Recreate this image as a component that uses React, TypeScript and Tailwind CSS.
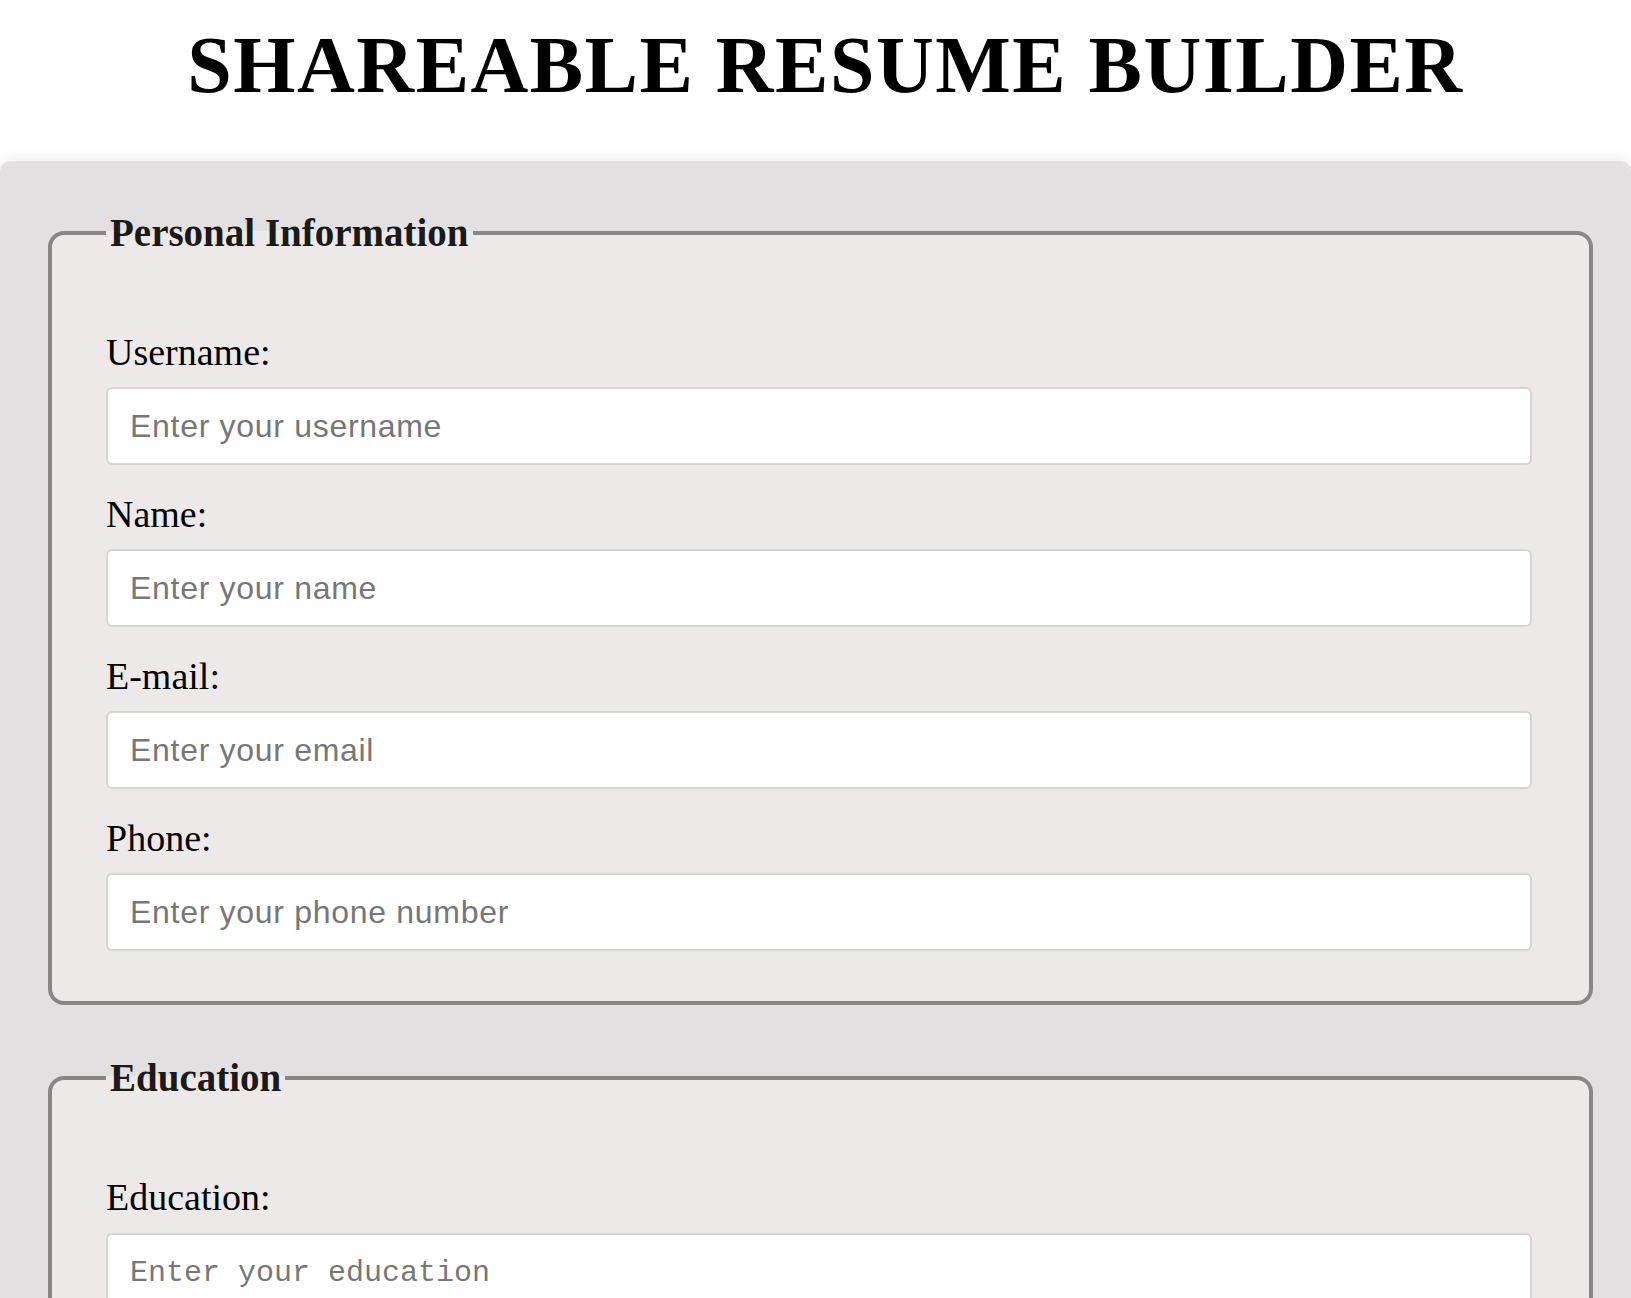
import React from "react";

type FieldProps = { label: string; placeholder: string; type?: string };

function Field({ label, placeholder, type = "text" }: FieldProps) {
  return (
    <div className="flex flex-col">
      <label className="block h-[42px] text-[38px] leading-[42px] text-black [font-family:'Liberation_Serif','Times_New_Roman',serif]">
        {label}
      </label>
      <input
        type={type}
        placeholder={placeholder}
        className="mt-[14px] h-[78px] w-full rounded-[6px] border-2 border-[#d6d4d4] bg-white px-[22px] text-[32px] tracking-[0.7px] text-black outline-none placeholder:text-[#777777] [font-family:'Liberation_Sans',Arial,sans-serif]"
      />
    </div>
  );
}

export default function App() {
  return (
    <div className="min-h-screen bg-white">
      <h1 className="pt-[21px] pl-[20px] text-center text-[80px] font-bold leading-[88px] tracking-[1.5px] text-black [font-family:'Liberation_Serif','Times_New_Roman',serif]">
        SHAREABLE RESUME BUILDER
      </h1>

      <div className="mt-[52px] rounded-t-[10px] bg-[#e2e0e1] pl-[48px] pr-[38px] pt-[51px] pb-[60px] shadow-[0_-5px_12px_rgba(0,0,0,0.05)]">
        <fieldset className="rounded-[16px] border-4 border-[#8a8687] bg-[#ece9e8] pl-[54px] pr-[57px] pt-[77px] pb-[50px]">
          <legend className="px-[4px] text-[39px] font-bold leading-[42px] text-[#1c1919] [font-family:'Liberation_Serif','Times_New_Roman',serif]">
            Personal Information
          </legend>
          <div className="flex flex-col gap-[28px]">
            <Field label="Username:" placeholder="Enter your username" />
            <Field label="Name:" placeholder="Enter your name" />
            <Field label="E-mail:" placeholder="Enter your email" type="email" />
            <Field label="Phone:" placeholder="Enter your phone number" type="tel" />
          </div>
        </fieldset>

        <fieldset className="mt-[52px] rounded-[16px] border-4 border-[#8a8687] bg-[#ece9e8] pl-[54px] pr-[57px] pt-[77px] pb-[50px]">
          <legend className="px-[4px] text-[39px] font-bold leading-[42px] text-[#1c1919] [font-family:'Liberation_Serif','Times_New_Roman',serif]">
            Education
          </legend>
          <div className="flex flex-col">
            <label className="block h-[42px] text-[38px] leading-[42px] text-black [font-family:'Liberation_Serif','Times_New_Roman',serif]">
              Education:
            </label>
            <textarea
              placeholder="Enter your education"
              className="mt-[15px] h-[180px] w-full resize-none rounded-[6px] border-2 border-[#d6d4d4] bg-white px-[22px] pt-[21px] text-[30px] leading-[34px] text-black outline-none placeholder:text-[#777777] [font-family:'Liberation_Mono','Courier_New',monospace]"
            />
          </div>
        </fieldset>
      </div>
    </div>
  );
}
